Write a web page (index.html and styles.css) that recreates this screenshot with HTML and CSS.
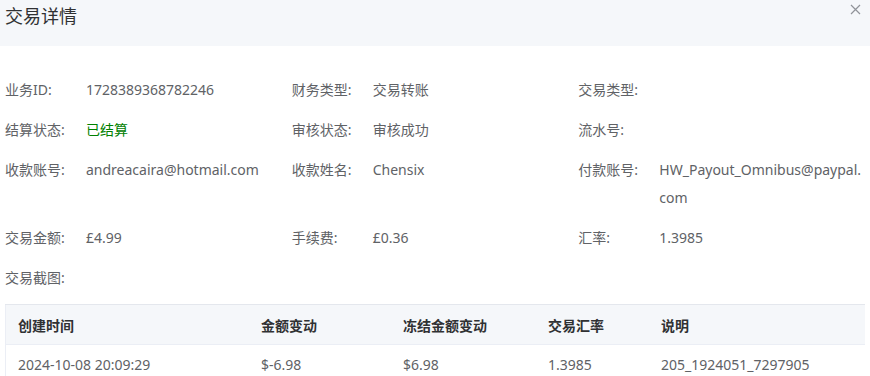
FILE: index.html
```html
<!DOCTYPE html>
<html lang="zh-CN">
<head>
  <meta charset="UTF-8">
  <title>交易详情</title>
  <link rel="stylesheet" href="styles.css">
</head>
<body>
  <div class="dialog-header">
    <span class="dialog-title">交易详情</span>
    <span class="dialog-close">
      <svg width="11" height="11" viewBox="0 0 11 11"><path d="M1 1L10 10M10 1L1 10" stroke="#909399" stroke-width="1.2"/></svg>
    </span>
  </div>

  <div class="dialog-body">
    <div class="info-grid">
      <div class="info-item"><span class="info-label">业务ID:</span><span class="info-value">1728389368782246</span></div>
      <div class="info-item"><span class="info-label">财务类型:</span><span class="info-value">交易转账</span></div>
      <div class="info-item"><span class="info-label">交易类型:</span><span class="info-value"></span></div>

      <div class="info-item"><span class="info-label">结算状态:</span><span class="info-value status-ok">已结算</span></div>
      <div class="info-item"><span class="info-label">审核状态:</span><span class="info-value">审核成功</span></div>
      <div class="info-item"><span class="info-label">流水号:</span><span class="info-value"></span></div>

      <div class="info-item"><span class="info-label">收款账号:</span><span class="info-value">andreacaira@hotmail.com</span></div>
      <div class="info-item"><span class="info-label">收款姓名:</span><span class="info-value">Chensix</span></div>
      <div class="info-item"><span class="info-label">付款账号:</span><span class="info-value">HW_Payout_Omnibus@paypal.<wbr>com</span></div>

      <div class="info-item"><span class="info-label">交易金额:</span><span class="info-value">£4.99</span></div>
      <div class="info-item"><span class="info-label">手续费:</span><span class="info-value">£0.36</span></div>
      <div class="info-item"><span class="info-label">汇率:</span><span class="info-value">1.3985</span></div>

      <div class="info-item"><span class="info-label">交易截图:</span><span class="info-value"></span></div>
    </div>

    <table class="record-table">
      <thead>
        <tr>
          <th class="col-time">创建时间</th>
          <th class="col-amount">金额变动</th>
          <th class="col-frozen">冻结金额变动</th>
          <th class="col-rate">交易汇率</th>
          <th>说明</th>
        </tr>
      </thead>
      <tbody>
        <tr>
          <td>2024-10-08 20:09:29</td>
          <td>$-6.98</td>
          <td>$6.98</td>
          <td>1.3985</td>
          <td>205_1924051_7297905</td>
        </tr>
      </tbody>
    </table>
  </div>
</body>
</html>
```

FILE: styles.css
```css
body {
  margin: 0;
  font-family: "Noto Sans", "Noto Sans CJK SC", sans-serif;
  font-size: 14px;
  color: #606266;
  background: #fff;
  overflow: hidden;
}

.dialog-header {
  height: 46px;
  background-color: #f5f7fa;
  display: flex;
  justify-content: space-between;
  align-items: flex-start;
  padding: 0 9px 0 5px;
}

.dialog-title {
  font-size: 18px;
  line-height: 32px;
  color: #303133;
}

.dialog-close {
  margin-top: 4px;
  line-height: 0;
}

.dialog-body {
  padding: 30px 5px 0 5px;
}

.info-grid {
  display: grid;
  grid-template-columns: repeat(3, 1fr);
  row-gap: 12px;
}

.info-item {
  display: flex;
  line-height: 28px;
}

.info-label {
  flex: 0 0 81px;
}

.info-value {
  flex: 1;
  min-width: 0;
  overflow-wrap: break-word;
}

.status-ok {
  color: #008000;
}

.record-table {
  width: 100%;
  margin-top: 12px;
  border-collapse: collapse;
  border-top: 1px solid #e4e7ed;
  border-left: 1px solid #ebeef5;
}

.record-table th,
.record-table td {
  text-align: left;
  padding: 0 12px;
  height: 39px;
  border-bottom: 1px solid #ebeef5;
}

.record-table th {
  background-color: #f5f7fa;
  color: #303133;
  font-weight: bold;
}

.col-time { width: 219px; }
.col-amount { width: 118px; }
.col-frozen { width: 121px; }
.col-rate { width: 89px; }
```
